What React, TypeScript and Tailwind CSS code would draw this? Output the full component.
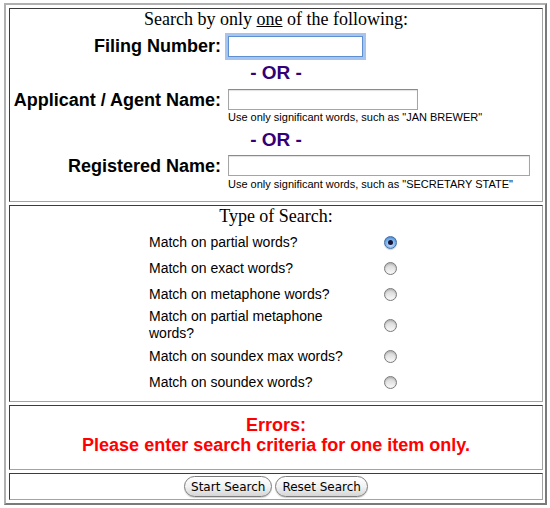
import React from "react";

const sans = "font-['Liberation_Sans',Arial,Helvetica,sans-serif]";
const serif = "font-['Liberation_Serif','Times_New_Roman',serif]";

const Cell = ({ className = "", children }: { className?: string; children?: React.ReactNode }) => (
  <div
    className={
      "border border-t-[#3c3c3c] border-l-[#3c3c3c] border-r-[#a3a3a3] border-b-[#a3a3a3] bg-white " + className
    }
  >
    {children}
  </div>
);

const FieldRow = ({
  label,
  className = "",
  children,
}: {
  label: string;
  className?: string;
  children: React.ReactNode;
}) => (
  <div className={"flex items-center " + className}>
    <label className={"w-[211px] text-right text-[18px] font-bold leading-[22px] text-black " + sans}>{label}</label>
    <div className="ml-[7px] flex items-center">{children}</div>
  </div>
);

const Or = ({ className = "" }: { className?: string }) => (
  <div className={"text-center text-[19px] font-bold leading-[22px] text-[#330077] " + sans + " " + className}>
    - OR -
  </div>
);

const Hint = ({ className = "", children }: { className?: string; children: React.ReactNode }) => (
  <div className={"pl-[218px] text-[11px] leading-[13px] text-black " + sans + " " + className}>{children}</div>
);

const TextInput = ({ width, focused = false }: { width: string; focused?: boolean }) => (
  <input
    type="text"
    className={
      focused
        ? "h-[21px] bg-white border border-[#5e8fd0] shadow-[0_0_0_3px_rgba(120,165,230,0.65)] outline-none " + width
        : "h-[21px] bg-white border border-[#a5a5a5] border-t-[#8a8a8a] shadow-[inset_0_1px_1px_rgba(0,0,0,0.12)] outline-none " +
          width
    }
  />
);

const Radio = ({ checked = false }: { checked?: boolean }) =>
  checked ? (
    <span className="flex h-[13px] w-[13px] items-center justify-center rounded-full border border-[#3f6ea8] bg-[radial-gradient(circle_at_50%_65%,#d6eaff_0%,#74aeea_55%,#2f6fc4_100%)] shadow-[0_1px_1px_rgba(0,0,0,0.2)]">
      <span className="h-[5px] w-[5px] rounded-full bg-[#16163a]" />
    </span>
  ) : (
    <span className="h-[13px] w-[13px] rounded-full border border-[#7a7a7a] bg-linear-to-b from-[#d2d2d2] to-[#fafafa] shadow-[inset_0_1px_2px_rgba(0,0,0,0.2)]" />
  );

const searchTypes = [
  { label: "Match on partial words?", checked: true },
  { label: "Match on exact words?" },
  { label: "Match on metaphone words?" },
  { label: "Match on partial metaphone words?" },
  { label: "Match on soundex max words?" },
  { label: "Match on soundex words?" },
];

const AquaButton = ({ children }: { children: React.ReactNode }) => (
  <button
    type="button"
    className="h-[21px] rounded-full border border-[#7d7d7d] bg-linear-to-b from-white via-[#f2f2f2] to-[#d6d6d6] px-[6px] text-[12px] leading-none text-black shadow-[0_1px_1px_rgba(0,0,0,0.18)] font-['Lucida_Grande','DejaVu_Sans',sans-serif]"
  >
    {children}
  </button>
);

export default function App() {
  return (
    <div className="h-[508px] w-[550px] bg-white pl-[4px] pt-[3px]">
      <div className="flex w-[543px] flex-col gap-[3px] border-2 border-t-[#b0b0b0] border-l-[#b0b0b0] border-r-[#7a7a7a] border-b-[#7a7a7a] pb-[3px] pl-[3px] pr-[2px] pt-[3px]">
        {/* search fields */}
        <Cell className="h-[194px]">
          <div className={"h-[21px] text-center text-[18px] leading-[21px] text-black " + serif}>
            Search by only <u>one</u> of the following:
          </div>
          <FieldRow label="Filing Number:" className="mt-[5px] h-[22px]">
            <TextInput width="w-[135px]" focused />
          </FieldRow>
          <Or className="mt-[5px]" />
          <FieldRow label="Applicant / Agent Name:" className="mt-[5px] h-[21px]">
            <TextInput width="w-[190px]" />
          </FieldRow>
          <Hint className="mt-[1px]">Use only significant words, such as "JAN BREWER"</Hint>
          <Or className="mt-[5px]" />
          <FieldRow label="Registered Name:" className="mt-[4px] h-[21px]">
            <TextInput width="w-[302px]" />
          </FieldRow>
          <Hint className="mt-[2px]">Use only significant words, such as "SECRETARY STATE"</Hint>
        </Cell>

        {/* type of search */}
        <Cell className="h-[197px]">
          <div className={"h-[21px] text-center text-[18px] leading-[21px] text-black " + serif}>Type of Search:</div>
          <div className="ml-[139px] mt-[2px] grid grid-cols-[212px_58px]">
            {searchTypes.map((t) => (
              <React.Fragment key={t.label}>
                <div className={"flex min-h-[26px] items-center py-[1px] text-[14px] leading-[17px] text-black " + sans}>
                  {t.label}
                </div>
                <div className="flex items-center justify-center">
                  <Radio checked={t.checked} />
                </div>
              </React.Fragment>
            ))}
          </div>
        </Cell>

        {/* errors */}
        <Cell className={"h-[65px] pt-[9px] text-center text-[18px] font-bold leading-[20px] text-[#ff0000] " + sans}>
          <div>Errors:</div>
          <div>Please enter search criteria for one item only.</div>
        </Cell>

        {/* buttons */}
        <Cell className="flex h-[27px] items-center justify-center gap-[3px]">
          <AquaButton>Start Search</AquaButton>
          <AquaButton>Reset Search</AquaButton>
        </Cell>
      </div>
    </div>
  );
}
